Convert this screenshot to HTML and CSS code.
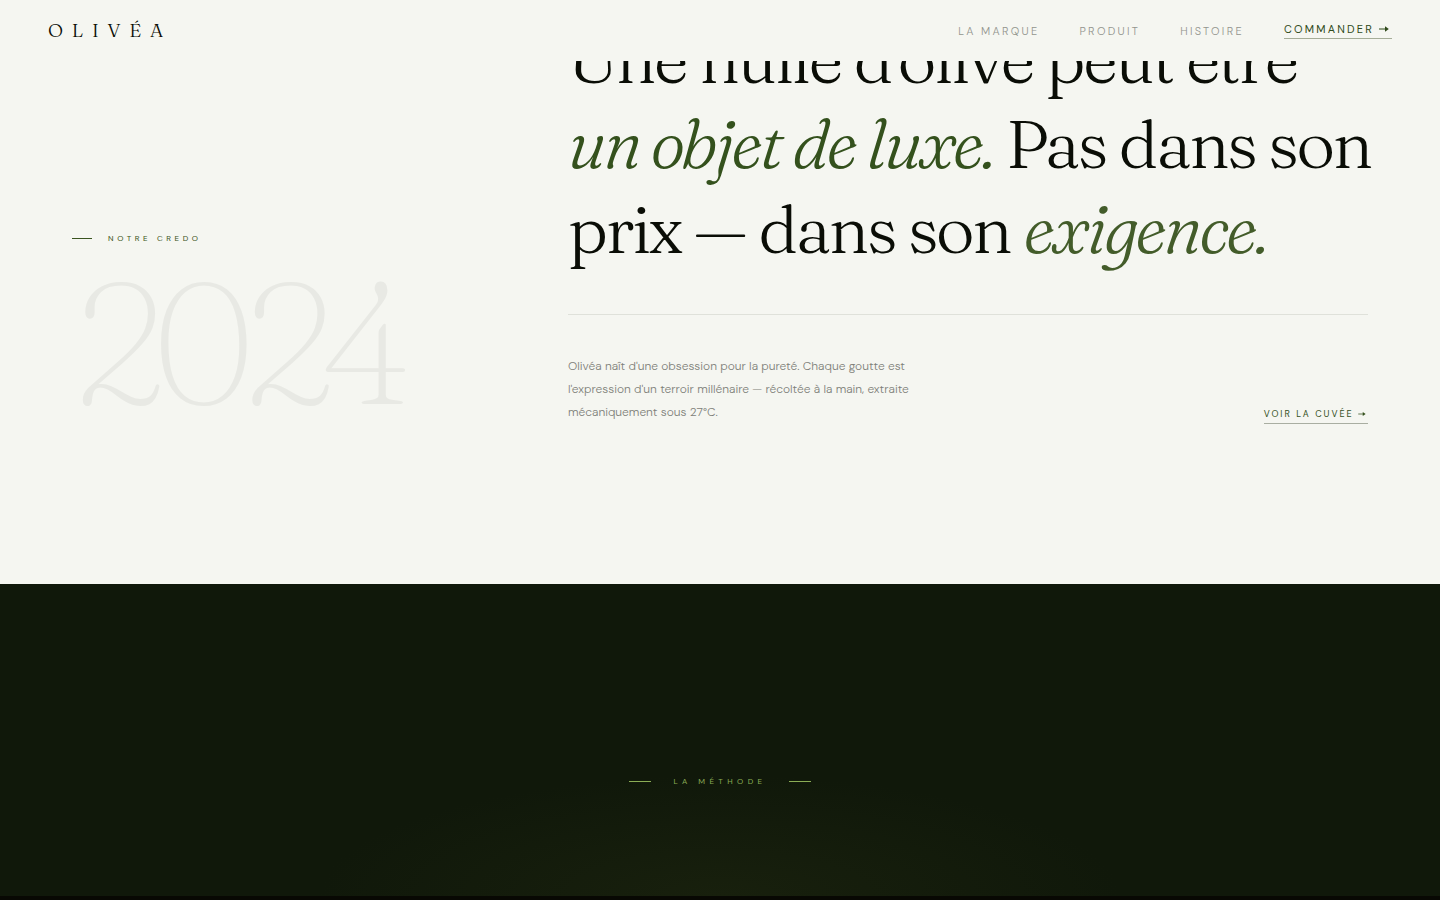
FILE: index.html
```html
<!DOCTYPE html>
<html lang="fr">
<head>
<meta charset="utf-8">
<meta name="viewport" content="width=device-width, initial-scale=1">
<title>Olivéa</title>
<link rel="stylesheet" href="styles.css">
</head>
<body>
<header class="site-header">
  <a class="brand" href="#">OLIVÉA</a>
  <nav class="site-nav" aria-label="Navigation principale">
    <a class="nav-link" href="#marque">LA MARQUE</a>
    <a class="nav-link" href="#produit">PRODUIT</a>
    <a class="nav-link" href="#histoire">HISTOIRE</a>
    <a class="nav-cta" href="#commander">COMMANDER <svg class="arrow" viewBox="0 0 10 8" aria-hidden="true"><path d="M0 4h7" fill="none" stroke="currentColor" stroke-width="1"/><path d="M6 1.2 9.8 4 6 6.8z" fill="currentColor"/></svg></a>
  </nav>
</header>
<main>
  <section class="credo" id="marque">
    <div class="credo-aside">
      <p class="eyebrow">NOTRE CREDO</p>
      <p class="year">2024</p>
    </div>
    <div class="credo-body">
      <h1 class="statement">Une huile d'olive peut être<br><em>un objet de luxe.</em> Pas dans son<br>prix — dans son <em class="soft">exigence.</em></h1>
      <div class="credo-foot">
        <p class="intro">Olivéa naît d'une obsession pour la pureté. Chaque goutte est l'expression d'un terroir millénaire — récoltée à la main, extraite mécaniquement sous 27°C.</p>
        <a class="more" href="#produit">VOIR LA CUVÉE <svg class="arrow arrow-small" viewBox="0 0 10 8" aria-hidden="true"><path d="M0 4h7" fill="none" stroke="currentColor" stroke-width="1"/><path d="M6 1.2 9.8 4 6 6.8z" fill="currentColor"/></svg></a>
      </div>
    </div>
  </section>
  <section class="method" id="histoire">
    <h2 class="method-label">LA MÉTHODE</h2>
  </section>
</main>
</body>
</html>
```
FILE: styles.css
```css
* {
  box-sizing: border-box;
}

body {
  margin: 0;
  background: #f5f6f1;
  color: #0a0d06;
  font-family: "DM Sans", Inter, "Liberation Sans", sans-serif;
}

a {
  color: inherit;
  text-decoration: none;
}

h1, h2, p {
  margin: 0;
  font-weight: 400;
}

main {
  display: flex;
  flex-direction: column;
  min-height: 100vh;
}

.site-header {
  position: fixed;
  top: 0;
  left: 0;
  right: 0;
  z-index: 10;
  display: flex;
  align-items: center;
  justify-content: space-between;
  height: 61px;
  padding: 0 48px;
  background: #f5f6f1;
}

.brand {
  padding-bottom: 2px;
  font-family: Fraunces, "Liberation Serif", serif;
  font-size: 19px;
  font-weight: 300;
  line-height: 22px;
  letter-spacing: 0.46em;
}

.site-nav {
  display: flex;
  align-items: center;
  gap: 40px;
}

.nav-link {
  color: #92948d;
  font-size: 11px;
  font-weight: 300;
  letter-spacing: 0.21em;
}

.nav-cta {
  padding-bottom: 2px;
  border-bottom: 1px solid #a5ad98;
  color: #2f4a1a;
  font-size: 11px;
  letter-spacing: 0.2em;
}

.arrow {
  width: 10px;
  height: 8px;
  margin-right: 3px;
}

.arrow-small {
  width: 8px;
  height: 6px;
  margin-right: 2px;
}

.credo {
  display: grid;
  grid-template-columns: minmax(0, 1fr) minmax(0, 2fr);
  gap: 96px;
  align-items: end;
  padding: 16px 72px 160px;
}

.eyebrow {
  display: flex;
  align-items: center;
  gap: 16px;
  color: #3a5420;
  font-size: 8px;
  line-height: 12px;
  letter-spacing: 0.45em;
}

.eyebrow::before {
  content: "";
  width: 20px;
  height: 1px;
  background: currentColor;
}

.year {
  margin-top: 16px;
  color: #e8e9e4;
  font-family: Fraunces, "Liberation Serif", serif;
  font-size: 172px;
  font-weight: 100;
  line-height: 164px;
  letter-spacing: -0.08em;
}

.statement {
  font-family: Fraunces, "Liberation Serif", serif;
  font-size: 68px;
  font-weight: 200;
  line-height: 85px;
  letter-spacing: -0.04em;
  white-space: nowrap;
}

.statement em {
  color: #34511d;
}

.statement .soft {
  color: #435c2a;
}

.credo-foot {
  display: flex;
  align-items: flex-end;
  justify-content: space-between;
  margin-top: 43px;
  padding-top: 40px;
  border-top: 1px solid #dfe1da;
}

.intro {
  max-width: 360px;
  color: #7e8079;
  font-size: 12px;
  font-weight: 300;
  line-height: 23px;
}

.more {
  padding-bottom: 4px;
  border-bottom: 1px solid #a9aea2;
  color: #34511d;
  font-size: 9px;
  line-height: 10px;
  letter-spacing: 0.22em;
}

.method {
  flex: 1;
  padding: 190px 72px 96px;
  border-bottom: 4px solid #080803;
  background: radial-gradient(ellipse 400px 120px at 50% 100%, #18200d, #10180a);
}

.method-label {
  display: flex;
  align-items: center;
  justify-content: center;
  gap: 22px;
  color: #8bad55;
  font-size: 8px;
  line-height: 14px;
  letter-spacing: 0.55em;
}

.method-label::before,
.method-label::after {
  content: "";
  width: 22px;
  height: 1px;
  background: currentColor;
}

@media (max-width: 1100px) {
  .credo {
    grid-template-columns: 1fr;
    gap: 48px;
    padding-top: 96px;
  }

  .statement {
    font-size: 48px;
    line-height: 56px;
    white-space: normal;
  }
}
```
